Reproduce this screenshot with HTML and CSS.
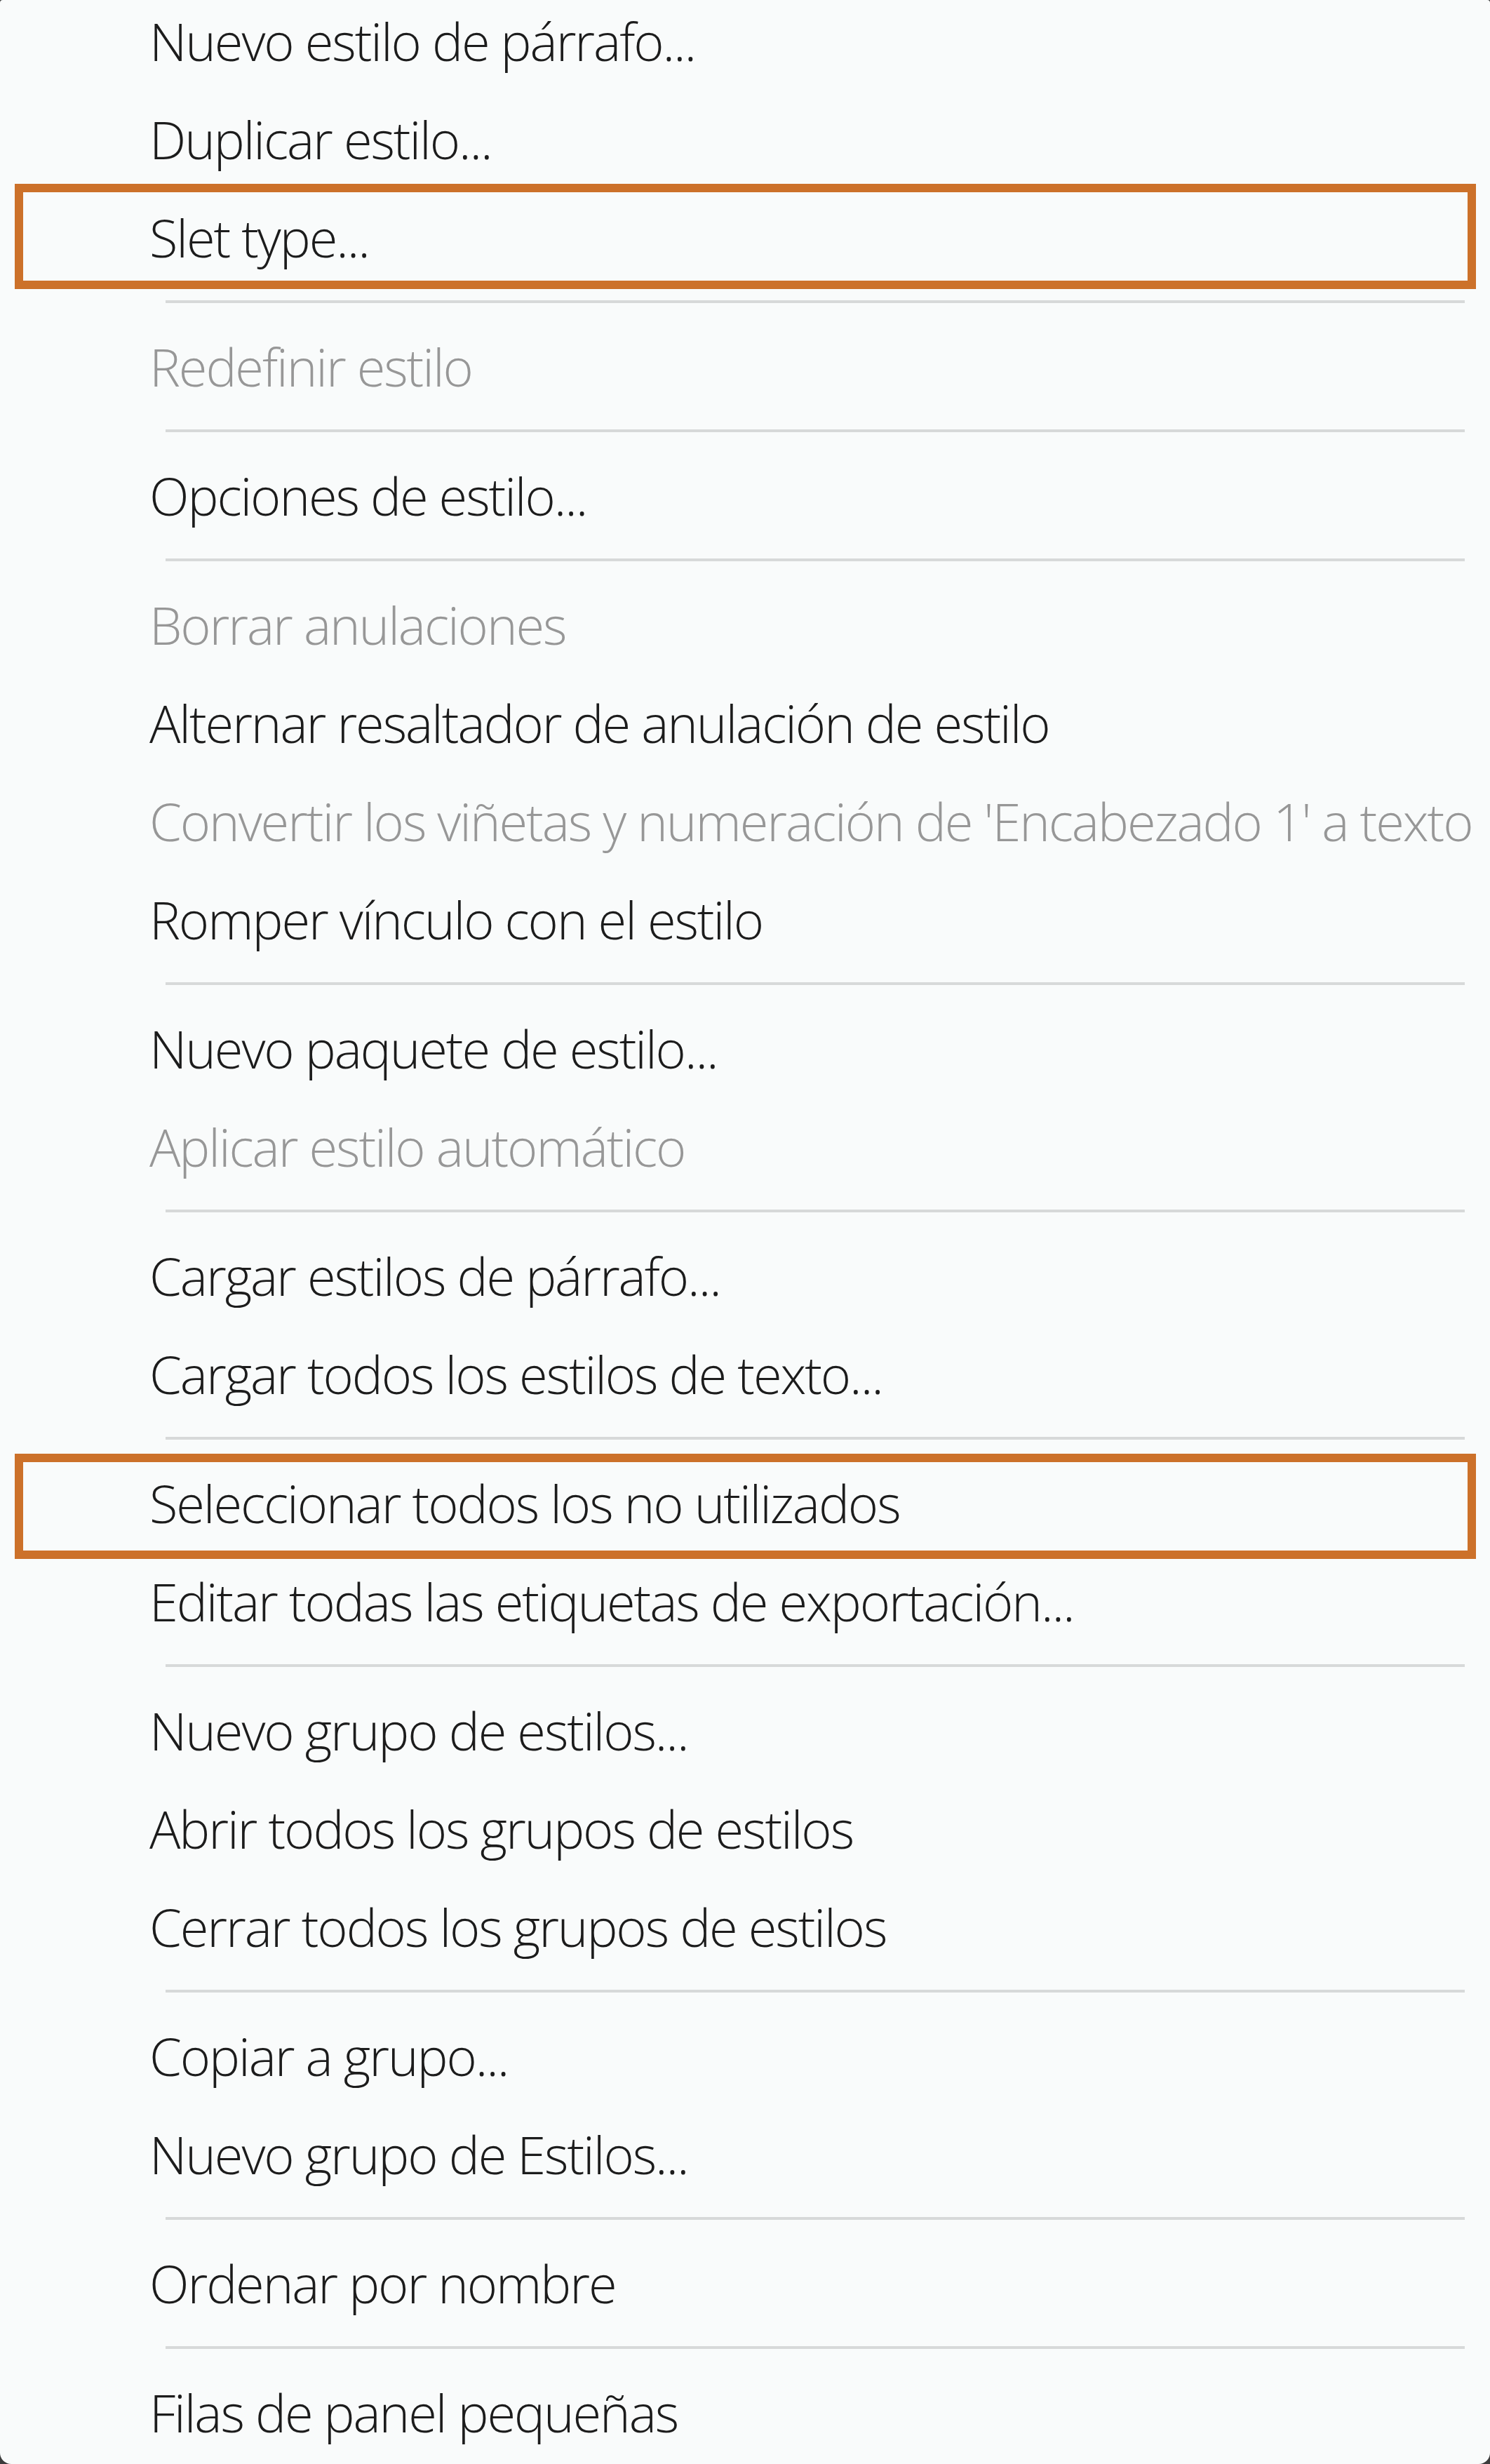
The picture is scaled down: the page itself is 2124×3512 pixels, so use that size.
FILE: index.html
```html
<!DOCTYPE html>
<html lang="es">
<head>
<meta charset="utf-8">
<title>Menú de estilos de párrafo</title>
<link rel="stylesheet" href="styles.css">
</head>
<body>
<div class="menu">
  <ul class="list">
    <li class="item">Nuevo estilo de párrafo...</li>
    <li class="item">Duplicar estilo...</li>
    <li class="item mark mark-a">Slet type...</li>
    <li class="sep"></li>
    <li class="item off">Redefinir estilo</li>
    <li class="sep"></li>
    <li class="item">Opciones de estilo...</li>
    <li class="sep"></li>
    <li class="item off">Borrar anulaciones</li>
    <li class="item">Alternar resaltador de anulación de estilo</li>
    <li class="item off">Convertir los viñetas y numeración de 'Encabezado 1' a texto</li>
    <li class="item">Romper vínculo con el estilo</li>
    <li class="sep"></li>
    <li class="item">Nuevo paquete de estilo...</li>
    <li class="item off">Aplicar estilo automático</li>
    <li class="sep"></li>
    <li class="item">Cargar estilos de párrafo...</li>
    <li class="item">Cargar todos los estilos de texto...</li>
    <li class="sep"></li>
    <li class="item mark mark-b">Seleccionar todos los no utilizados</li>
    <li class="item">Editar todas las etiquetas de exportación...</li>
    <li class="sep"></li>
    <li class="item">Nuevo grupo de estilos...</li>
    <li class="item">Abrir todos los grupos de estilos</li>
    <li class="item">Cerrar todos los grupos de estilos</li>
    <li class="sep"></li>
    <li class="item">Copiar a grupo...</li>
    <li class="item">Nuevo grupo de Estilos...</li>
    <li class="sep"></li>
    <li class="item">Ordenar por nombre</li>
    <li class="sep"></li>
    <li class="item">Filas de panel pequeñas</li>
  </ul>
</div>
</body>
</html>
```

FILE: styles.css
```css
html, body {
  margin: 0;
  padding: 0;
  background: #3c3c3c;
}

.menu {
  width: 2124px;
  height: 3512px;
  overflow: hidden;
  background: #f9fbfb;
  border-radius: 4px 4px 16px 16px;
  font-family: "Open Sans", "Liberation Sans", sans-serif;
  font-weight: 300;
  font-size: 74px;
  letter-spacing: -2.1px;
  color: #1c1c1c;
}

.list {
  list-style: none;
  margin: -13px 0 0 0;
  padding: 0;
}

.item {
  position: relative;
  height: 140px;
  box-sizing: border-box;
  padding: 4px 0 0 213px;
  line-height: 136px;
  white-space: nowrap;
}

.item.off {
  color: #979797;
}

.sep {
  height: 4px;
  margin: 21px 36px 19px 236px;
  background: #d7d9d9;
}

.mark::after {
  content: "";
  position: absolute;
  left: 21px;
  right: 20px;
  border: 12px solid #cc712a;
  pointer-events: none;
}

.mark-a::after {
  top: -5px;
  bottom: -5px;
}

.mark-b::after {
  top: 1px;
  bottom: -11px;
}
```
